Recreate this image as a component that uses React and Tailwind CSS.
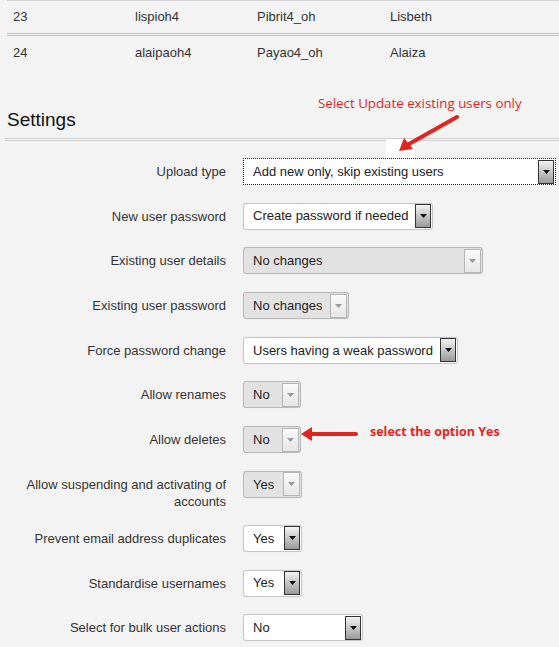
import React from "react";

function Arrow({ disabled }) {
  return (
    <span
      className={
        disabled
          ? "flex h-[24px] w-[17px] items-center justify-center border border-[#b5b5b5] bg-gradient-to-b from-[#fafafa] to-[#e6e6e6]"
          : "flex h-[24px] w-[16px] items-center justify-center border border-[#333] bg-gradient-to-b from-[#f4f4f4] to-[#9a9a9a]"
      }
    >
      <svg width="7" height="4" viewBox="0 0 7 4">
        <path d="M0 0 L7 0 L3.5 4 Z" fill={disabled ? "#9a9a9a" : "#111"} />
      </svg>
    </span>
  );
}

function Select({ value, width, disabled, focus }) {
  const base =
    "flex h-[27px] items-center justify-between rounded-[3px] pl-[9px] pr-[1px] text-[13px] text-[#222] shadow-[0_0_1px_rgba(0,0,0,0.15)]";
  const cls = disabled
    ? base + " border border-[#b9b9b9] bg-[#e2e2e2]"
    : focus
    ? base + " border border-dotted border-[#222] bg-white rounded-none"
    : base + " border border-[#c6c6c6] bg-white";
  return (
    <div className={cls} style={{ width }}>
      <span className="truncate">{value}</span>
      <Arrow disabled={disabled} />
    </div>
  );
}

const rows = [
  { label: "Upload type", value: "Add new only, skip existing users", w: 313, focus: true },
  { label: "New user password", value: "Create password if needed", w: 190 },
  { label: "Existing user details", value: "No changes", w: 240, disabled: true },
  { label: "Existing user password", value: "No changes", w: 106, disabled: true },
  { label: "Force password change", value: "Users having a weak password", w: 215 },
  { label: "Allow renames", value: "No", w: 58, disabled: true },
  { label: "Allow deletes", value: "No", w: 58, disabled: true },
  { label: "Allow suspending and activating of accounts", value: "Yes", w: 59, disabled: true, tall: true },
  { label: "Prevent email address duplicates", value: "Yes", w: 59 },
  { label: "Standardise usernames", value: "Yes", w: 59 },
  { label: "Select for bulk user actions", value: "No", w: 120 },
];

export default function App() {
  return (
    <div
      className="relative h-[647px] w-[559px] overflow-hidden bg-[#f3f3f3] text-[13px] text-[#333]"
      style={{ fontFamily: "'Liberation Sans', Arial, sans-serif" }}
    >
      {/* table */}
      <div className="ml-[7px] border-t border-[#d6d6d6]">
        <div className="flex h-[32px] items-center">
          <span className="w-[128px] pl-[6px]">23</span>
          <span className="w-[122px]">lispioh4</span>
          <span className="w-[133px]">Pibrit4_oh</span>
          <span>Lisbeth</span>
        </div>
        <div className="flex h-[36px] items-center border-t-[3px] border-double border-[#c4c4c4]">
          <span className="w-[128px] pl-[6px]">24</span>
          <span className="w-[122px]">alaipaoh4</span>
          <span className="w-[133px]">Payao4_oh</span>
          <span>Alaiza</span>
        </div>
      </div>

      {/* heading */}
      <div className="ml-[5px] mt-[39px] border-b-[3px] border-double border-[#cfcfcf] pb-[6px] pl-[2px]">
        <h2 className="text-[19px] leading-[24px] text-[#111]">Settings</h2>
      </div>

      {/* form */}
      <div className="pt-[17px]">
        {rows.map((r) => (
          <div key={r.label} className={"flex items-start " + (r.tall ? "h-[54px]" : "h-[44.7px]")}>
            <div className="w-[226px] pt-[5px] text-right leading-[17px] text-[#333]">
              {r.tall ? (
                <span className="block pl-[24px]">Allow suspending and activating of accounts</span>
              ) : (
                r.label
              )}
            </div>
            <div className="ml-[17px]">
              <Select value={r.value} width={r.w} disabled={r.disabled} focus={r.focus} />
            </div>
          </div>
        ))}
      </div>

      {/* annotation 1 */}
      <div
        className="absolute left-[318px] top-[94px] text-[13.3px] text-[#e0261f]"
        style={{ fontFamily: "'Open Sans', 'Noto Sans', sans-serif" }}
      >
        Select Update existing users only
      </div>
      <div className="absolute left-[386px] top-[139px] h-[19px] w-[29px] bg-white" />
      <svg className="absolute left-0 top-0" width="559" height="647">
        <line x1="457" y1="117" x2="409" y2="144" stroke="#e0261f" strokeWidth="4" strokeLinecap="round" />
        <path d="M399 151 L404 138 L413 149 Z" fill="#e0261f" />
        <line x1="356" y1="434" x2="312" y2="434" stroke="#e0261f" strokeWidth="4" strokeLinecap="round" />
        <path d="M301 434 L312 427 L312 441 Z" fill="#e0261f" />
      </svg>

      {/* annotation 2 */}
      <div
        className="absolute left-[370px] top-[423px] text-[12.5px] font-bold text-[#e0261f]"
        style={{ fontFamily: "'Open Sans', 'Noto Sans', sans-serif" }}
      >
        select the option Yes
      </div>
    </div>
  );
}
